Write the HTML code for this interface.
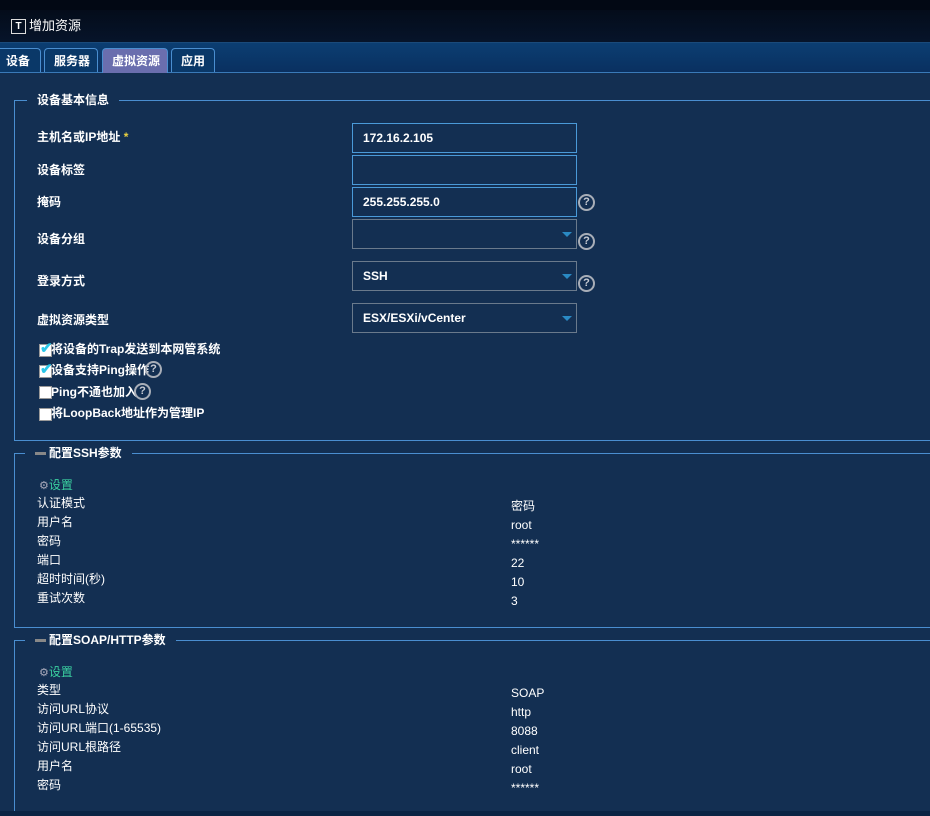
<!DOCTYPE html><html><head><meta charset="utf-8"><style>
html,body{margin:0;width:930px;height:816px;overflow:hidden}
body{background:#132f52;font-family:"Liberation Sans","Noto Sans CJK SC",sans-serif;font-size:12px;color:#fff;position:relative}
.a{position:absolute;white-space:nowrap;line-height:14px}
.b{font-weight:bold}
.in{position:absolute;left:352px;width:223px;height:28px;border:1px solid #4a9ad8;box-sizing:content-box}
.sel{border-color:#6a7a8c}
.in span{position:absolute;left:10px;top:7px;font-weight:bold}
.arr{position:absolute;right:4px;top:12px;width:0;height:0;border-left:5px solid transparent;border-right:5px solid transparent;border-top:5px solid #2a8ac4}
.q{position:absolute;width:13px;height:13px;border:2px solid #a8aeb8;border-radius:50%;color:#c8ccd4;font-size:11px;font-weight:bold;line-height:13px;text-align:center}
.fs{position:absolute;left:14px;right:-10px;border:1px solid #4a8ed0}
.lg{position:absolute;top:-8px;background:#132f52;padding:0 10px;font-weight:bold;line-height:15px}
.cb{position:absolute;left:39px;width:11px;height:11px;background:#fff;border:1px solid #999}
.ck{position:absolute;left:40px;font-size:15px;color:#2ac6e8;font-weight:bold;line-height:12px}
.gear{color:#aab;font-size:11px}
</style></head><body>
<div style="position:absolute;left:0;top:0;width:930px;height:43px;background:linear-gradient(#040c1a,#06142a);border-top:10px solid #020814;box-sizing:border-box;border-bottom:1px solid #1a4a7a"></div>
<div style="position:absolute;left:11px;top:19px;width:13px;height:13px;border:1px solid #ddd;color:#fff;font-size:10px;font-weight:bold;line-height:13px;text-align:center">T</div>
<div class="a" style="left:29px;top:19px;font-size:13px">增加资源</div>
<div style="position:absolute;left:0;top:43px;width:930px;height:29px;background:linear-gradient(#0b3e72,#0a3060);border-bottom:1px solid #3a7ab8"></div>
<div style="position:absolute;left:-5px;top:48px;width:44px;height:23px;border:1px solid #4a8ed0;border-bottom:none;border-radius:4px 4px 0 0;background:#0a3868"></div><div class="a b" style="left:6px;top:54px">设备</div>
<div style="position:absolute;left:44px;top:48px;width:52px;height:23px;border:1px solid #4a8ed0;border-bottom:none;border-radius:4px 4px 0 0;background:#0a3868"></div><div class="a b" style="left:54px;top:54px">服务器</div>
<div style="position:absolute;left:102px;top:48px;width:64px;height:24px;border:1px solid #4a8ed0;border-bottom:none;border-radius:4px 4px 0 0;background:#6a6eae"></div><div class="a b" style="left:112px;top:54px">虚拟资源</div>
<div style="position:absolute;left:171px;top:48px;width:42px;height:23px;border:1px solid #4a8ed0;border-bottom:none;border-radius:4px 4px 0 0;background:#0a3868"></div><div class="a b" style="left:181px;top:54px">应用</div>

<div class="fs" style="top:100px;height:339px"><div class="lg" style="left:12px">设备基本信息</div></div>
<div class="a b" style="left:37px;top:130px">主机名或IP地址 <span style="color:#e8d040">*</span></div>
<div class="a b" style="left:37px;top:163px">设备标签</div>
<div class="a b" style="left:37px;top:195px">掩码</div>
<div class="a b" style="left:37px;top:232px">设备分组</div>
<div class="a b" style="left:37px;top:274px">登录方式</div>
<div class="a b" style="left:37px;top:313px">虚拟资源类型</div>
<div class="in" style="top:123px"><span>172.16.2.105</span></div>
<div class="in" style="top:155px"></div>
<div class="in" style="top:187px"><span>255.255.255.0</span></div>
<div class="in sel" style="top:219px"><div class="arr"></div></div>
<div class="in sel" style="top:261px"><span>SSH</span><div class="arr"></div></div>
<div class="in sel" style="top:303px"><span>ESX/ESXi/vCenter</span><div class="arr"></div></div>
<div class="q" style="left:578px;top:194px">?</div>
<div class="q" style="left:578px;top:233px">?</div>
<div class="q" style="left:578px;top:275px">?</div>
<div class="cb" style="top:344px"></div><div class="ck" style="top:343px">✔</div><div class="a b" style="left:51px;top:342px">将设备的Trap发送到本网管系统</div>
<div class="cb" style="top:365px"></div><div class="ck" style="top:364px">✔</div><div class="a b" style="left:51px;top:363px">设备支持Ping操作</div><div class="q" style="left:145px;top:361px">?</div>
<div class="cb" style="top:386px"></div><div class="a b" style="left:51px;top:385px">Ping不通也加入</div><div class="q" style="left:134px;top:383px">?</div>
<div class="cb" style="top:408px"></div><div class="a b" style="left:51px;top:406px">将LoopBack地址作为管理IP</div>

<div class="fs" style="top:453px;height:173px"><div class="lg" style="left:10px"><span style="display:inline-block;width:11px;height:3px;background:#888;vertical-align:middle;margin-right:3px"></span>配置SSH参数</div></div>
<div class="a" style="left:39px;top:478px"><span class="gear">⚙</span><span style="color:#3ad0a0">设置</span></div>
<div class="a" style="left:37px;top:496px">认证模式</div><div class="a" style="left:511px;top:499px">密码</div>
<div class="a" style="left:37px;top:515px">用户名</div><div class="a" style="left:511px;top:518px">root</div>
<div class="a" style="left:37px;top:534px">密码</div><div class="a" style="left:511px;top:537px">******</div>
<div class="a" style="left:37px;top:553px">端口</div><div class="a" style="left:511px;top:556px">22</div>
<div class="a" style="left:37px;top:572px">超时时间(秒)</div><div class="a" style="left:511px;top:575px">10</div>
<div class="a" style="left:37px;top:591px">重试次数</div><div class="a" style="left:511px;top:594px">3</div>

<div class="fs" style="top:640px;height:190px;border-bottom:none"><div class="lg" style="left:10px"><span style="display:inline-block;width:11px;height:3px;background:#888;vertical-align:middle;margin-right:3px"></span>配置SOAP/HTTP参数</div></div>
<div class="a" style="left:39px;top:665px"><span class="gear">⚙</span><span style="color:#3ad0a0">设置</span></div>
<div class="a" style="left:37px;top:683px">类型</div><div class="a" style="left:511px;top:686px">SOAP</div>
<div class="a" style="left:37px;top:702px">访问URL协议</div><div class="a" style="left:511px;top:705px">http</div>
<div class="a" style="left:37px;top:721px">访问URL端口(1-65535)</div><div class="a" style="left:511px;top:724px">8088</div>
<div class="a" style="left:37px;top:740px">访问URL根路径</div><div class="a" style="left:511px;top:743px">client</div>
<div class="a" style="left:37px;top:759px">用户名</div><div class="a" style="left:511px;top:762px">root</div>
<div class="a" style="left:37px;top:778px">密码</div><div class="a" style="left:511px;top:781px">******</div>
<div style="position:absolute;left:0;top:811px;width:930px;height:5px;background:#0a2444"></div>
</body></html>
